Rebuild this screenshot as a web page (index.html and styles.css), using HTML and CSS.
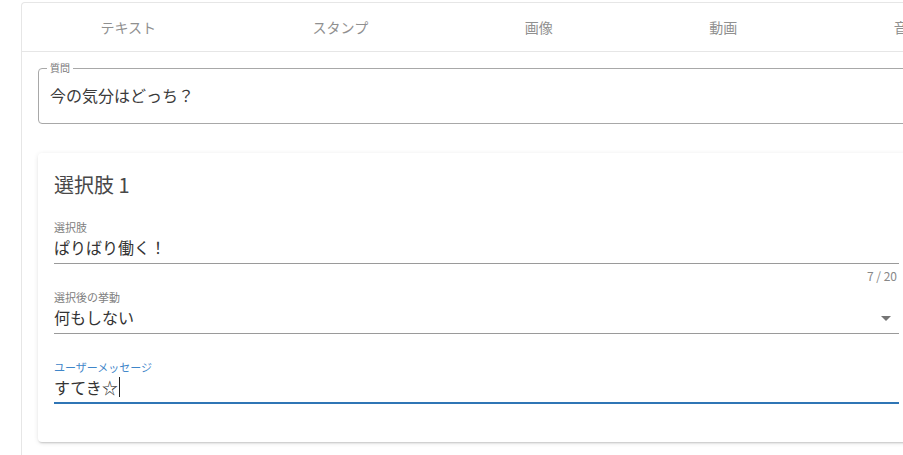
FILE: index.html
```html
<!DOCTYPE html>
<html lang="ja">
<head>
<meta charset="utf-8">
<link rel="stylesheet" href="styles.css">
</head>
<body>
<div class="page">
  <div class="outer">
    <div class="tabs">
      <div class="tab">テキスト</div>
      <div class="tab">スタンプ</div>
      <div class="tab">画像</div>
      <div class="tab">動画</div>
      <div class="tab">音声</div>
    </div>
    <div class="content">
      <div class="outlined">
        <span class="outlined-label">質問</span>
        <div class="outlined-value">今の気分はどっち？</div>
      </div>
      <div class="card">
        <div class="card-title">選択肢 1</div>
        <div class="field first">
          <div class="field-label">選択肢</div>
          <div class="field-value">ぱりばり働く！</div>
          <div class="counter">7 / 20</div>
        </div>
        <div class="field second">
          <div class="field-label">選択後の挙動</div>
          <div class="field-value select">
            <span>何もしない</span>
            <span class="arrow"></span>
          </div>
        </div>
        <div class="field third focused">
          <div class="field-label">ユーザーメッセージ</div>
          <div class="field-value">すてき☆<span class="caret"></span></div>
        </div>
      </div>
    </div>
  </div>
</div>
</body>
</html>
```

FILE: styles.css
```css
* { box-sizing: border-box; }
html, body {
  margin: 0;
  padding: 0;
  background: #ffffff;
  overflow: hidden;
}
body {
  font-family: "Noto Sans CJK JP", "Noto Sans", sans-serif;
  color: #333;
  width: 903px;
  height: 455px;
}
.page {
  padding: 2px 0 0 21px;
}
.outer {
  width: 911px;
  height: 453px;
  border: 1px solid #e6e6e6;
  border-bottom: none;
  border-radius: 4px 4px 0 0;
  background: #fff;
}
.tabs {
  display: flex;
  height: 49px;
  border-bottom: 1px solid #e6e6e6;
  overflow: hidden;
}
.tab {
  flex: none;
  padding: 0 78px 0 78.5px;
  display: flex;
  align-items: center;
  font-size: 14px;
  color: #909090;
}
.content {
  padding: 16px 16px 0 16px;
}
.outlined {
  position: relative;
  height: 56px;
  border: 1px solid #a8a8a8;
  border-radius: 4px;
  display: flex;
  align-items: center;
  padding-left: 11px;
  width: 900px;
}
.outlined-label {
  position: absolute;
  left: 8px;
  top: -8px;
  padding: 0 3px;
  background: #fff;
  font-size: 10px;
  line-height: 14px;
  color: #777;
}
.outlined-value {
  font-size: 16px;
  line-height: 24px;
  color: #3a3a3a;
  margin-top: -2px;
}
.card {
  margin-top: 29px;
  width: 877px;
  padding: 16px 16px 38px 16px;
  border-radius: 4px;
  background: #fff;
  box-shadow: 0 2px 2px -1px rgba(0,0,0,0.18), 0 1px 5px 0 rgba(0,0,0,0.10);
}
.card-title {
  font-size: 20px;
  line-height: 32px;
  color: #484848;
}
.field-label {
  font-size: 11px;
  line-height: 16px;
  color: #808080;
}
.field-value {
  font-size: 16px;
  line-height: 24px;
  color: #333;
  padding-bottom: 4px;
  border-bottom: 1px solid #9a9a9a;
  display: flex;
  align-items: center;
}
.field.first { margin-top: 18px; }
.counter {
  margin-top: 4px;
  text-align: right;
  font-size: 12px;
  line-height: 16px;
  color: #888;
  padding-right: 2px;
}
.field.second { margin-top: 5px; }
.select {
  justify-content: space-between;
}
.arrow {
  width: 0;
  height: 0;
  border-left: 5px solid transparent;
  border-right: 5px solid transparent;
  border-top: 5px solid #757575;
  margin-right: 8px;
  margin-top: 2px;
}
.field.third { margin-top: 25px; }
.focused .field-label { color: #3f86c9; }
.focused .field-value {
  border-bottom: 2px solid #2f75b5;
  padding-bottom: 3px;
}
.caret {
  display: inline-block;
  width: 1px;
  height: 20px;
  background: #222;
  margin-left: 1px;
}
```
